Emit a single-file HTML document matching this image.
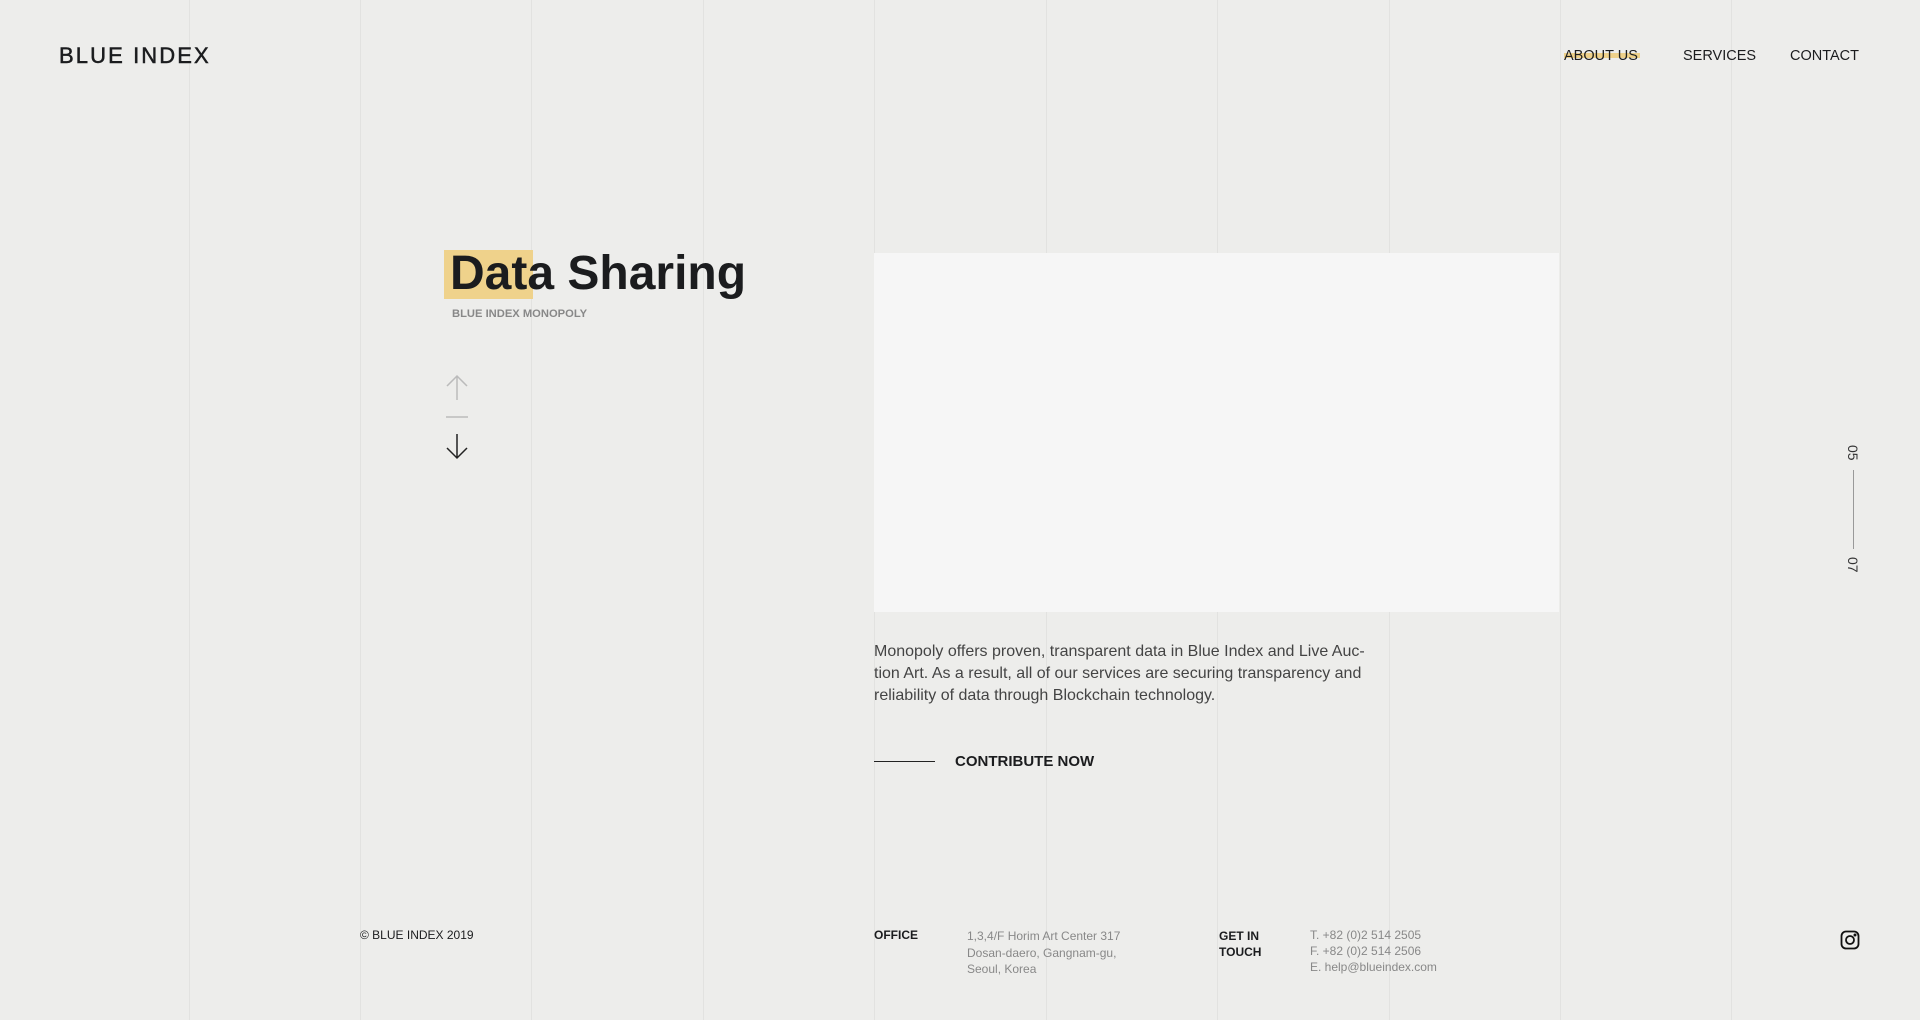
<!DOCTYPE html>
<html><head><meta charset="utf-8"><style>
*{margin:0;padding:0;box-sizing:border-box}
body{width:1920px;height:1020px;background:#ededeb;font-family:"Liberation Sans",sans-serif;position:relative;overflow:hidden;color:#1b1c1e}
.g{position:absolute;top:0;width:1px;height:1020px;background:#e2e2e0}
.a{position:absolute;white-space:nowrap}
</style></head><body>
<div class="g" style="left:189px"></div><div class="g" style="left:360px"></div><div class="g" style="left:531px"></div><div class="g" style="left:703px"></div><div class="g" style="left:874px"></div><div class="g" style="left:1046px"></div><div class="g" style="left:1217px"></div><div class="g" style="left:1389px"></div><div class="g" style="left:1560px"></div><div class="g" style="left:1731px"></div>

<div class="a" style="left:59px;top:43px;font-size:22px;letter-spacing:2.1px;-webkit-text-stroke:0.5px #1b1c1e">BLUE INDEX</div>
<div class="a" style="left:1564px;top:53px;width:76px;height:5px;background:#edd08a"></div>
<div class="a" style="left:1564px;top:48px;font-size:14.5px">ABOUT US</div>
<div class="a" style="left:1683px;top:48px;font-size:14.5px">SERVICES</div>
<div class="a" style="left:1790px;top:48px;font-size:14.5px">CONTACT</div>

<div class="a" style="left:444px;top:250px;width:89px;height:49px;background:#efd28b"></div>
<div class="a" style="left:450px;top:246px;font-size:48px;font-weight:bold">Data Sharing</div>
<div class="a" style="left:452px;top:308px;font-size:11.2px;font-weight:bold;color:#888">BLUE INDEX MONOPOLY</div>

<svg class="a" style="left:444px;top:374px" width="26" height="86" viewBox="0 0 26 86" fill="none" stroke-width="1.5">
<path d="M13 2V26M3 12L13 2L23 12" stroke="#bbb"/>
<path d="M2 43H24" stroke="#bbb"/>
<path d="M13 60V84M3 74L13 84L23 74" stroke="#222"/>
</svg>

<div class="a" style="left:874px;top:253px;width:685px;height:359px;background:#f6f6f6"></div>
<div class="a" style="left:874px;top:641px;width:505px;font-size:16px;line-height:22px;color:#444;white-space:normal">Monopoly offers proven, transparent data in Blue Index and Live Auc-tion Art. As a result, all of our services are securing transparency and reliability of data through Blockchain technology.</div>
<div class="a" style="left:874px;top:761px;width:61px;height:1px;background:#222"></div>
<div class="a" style="left:955px;top:753px;font-size:15px;font-weight:bold">CONTRIBUTE NOW</div>

<div class="a" style="left:1845px;top:445px;font-size:14px;transform:rotate(90deg);transform-origin:8px 8px;color:#333">05</div>
<div class="a" style="left:1853px;top:470px;width:1px;height:79px;background:#999"></div>
<div class="a" style="left:1845px;top:557px;font-size:14px;transform:rotate(90deg);transform-origin:8px 8px;color:#333">07</div>

<div class="a" style="left:360px;top:928px;font-size:12px">© BLUE INDEX 2019</div>
<div class="a" style="left:874px;top:928px;font-size:12px;font-weight:bold">OFFICE</div>
<div class="a" style="left:967px;top:928px;font-size:12px;line-height:16.5px;color:#888">1,3,4/F Horim Art Center 317<br>Dosan-daero, Gangnam-gu,<br>Seoul, Korea</div>
<div class="a" style="left:1219px;top:928px;font-size:12px;line-height:16px;font-weight:bold">GET IN<br>TOUCH</div>
<div class="a" style="left:1310px;top:927px;font-size:12px;line-height:16px;color:#888">T. +82 (0)2 514 2505<br>F. +82 (0)2 514 2506<br>E. help@blueindex.com</div>
<svg class="a" style="left:1840px;top:930px" width="20" height="20" viewBox="0 0 20 20" fill="none" stroke="#111" stroke-width="1.8"><rect x="1.5" y="1.5" width="17" height="17" rx="4.5"/><circle cx="10" cy="10" r="4"/><circle cx="15" cy="5" r="0.6" fill="#111"/></svg>
</body></html>
